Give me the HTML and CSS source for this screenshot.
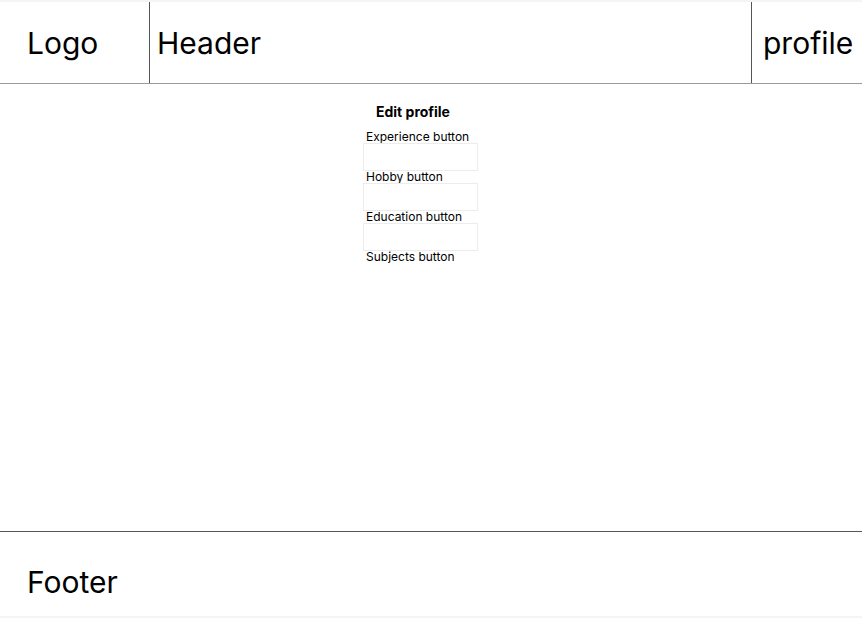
FILE: index.html
```html
<!DOCTYPE html>
<html>
<head>
<meta charset="utf-8">
<link rel="stylesheet" href="styles.css">
</head>
<body>
<div class="page">
  <header class="top">
    <div class="cell logo">Logo</div>
    <div class="cell title">Header</div>
    <div class="cell profile">profile</div>
  </header>
  <main class="main">
    <div class="column">
      <div class="heading">Edit profile</div>
      <div class="label">Experience button</div>
      <div class="box"></div>
      <div class="label">Hobby button</div>
      <div class="box"></div>
      <div class="label">Education button</div>
      <div class="box"></div>
      <div class="label">Subjects button</div>
    </div>
  </main>
  <footer class="foot">Footer</footer>
</div>
</body>
</html>
```

FILE: styles.css
```css
html, body {
  margin: 0;
  padding: 0;
}
body {
  background: #f4f4f4;
  font-family: Inter, "Noto Sans", sans-serif;
  color: #000;
  overflow: hidden;
}
.page {
  margin-top: 2px;
  height: 614px;
  background: #fff;
  display: flex;
  flex-direction: column;
}
.top {
  height: 81px;
  display: flex;
  border-bottom: 1px solid #9a9a9a;
  flex: none;
}
.cell {
  font-size: 30px;
  line-height: 36px;
  display: flex;
  align-items: center;
  white-space: nowrap;
  overflow: hidden;
}
.logo {
  width: 150px;
  padding-left: 27px;
  box-sizing: border-box;
  border-right: 1px solid #555;
}
.title {
  flex: 1;
  padding-left: 7px;
  border-right: 1px solid #555;
}
.profile {
  width: 110px;
  padding-left: 11px;
  box-sizing: border-box;
}
.main {
  flex: 1;
  padding-top: 19px;
  padding-left: 363px;
}
.column {
  width: 115px;
  display: flex;
  flex-direction: column;
}
.heading {
  font-weight: 700;
  font-size: 14px;
  line-height: 17px;
  margin-left: 13px;
  margin-bottom: 11px;
}
.label {
  font-size: 12px;
  line-height: 12px;
  padding-left: 3px;
  white-space: nowrap;
}
.box {
  height: 28px;
  box-sizing: border-box;
  border: 1px solid #ececec;
}
.foot {
  flex: none;
  height: 85px;
  box-sizing: border-box;
  border-top: 1px solid #555;
  padding: 32px 0 0 27px;
  font-size: 30px;
  line-height: 36px;
}
```
